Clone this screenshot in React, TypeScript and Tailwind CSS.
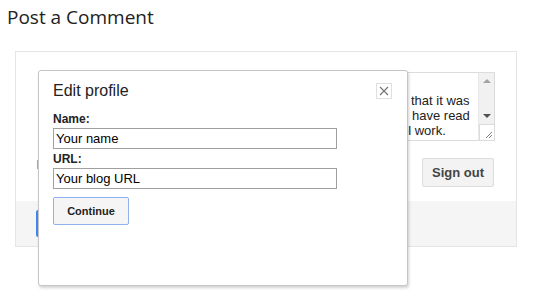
import React from 'react';

function Scrollbar() {
    return (
        <div className="flex w-[16px] flex-col border-l border-[#e8e8e8] bg-[#f1f1f1]">
            <div className="flex h-[16px] items-center justify-center">
                <div className="h-0 w-0 border-x-[4px] border-b-[4px] border-x-transparent border-b-[#a3a3a3]" />
            </div>
            <div className="flex-1" />
            <div className="flex h-[16px] items-center justify-center">
                <div className="h-0 w-0 border-x-[4px] border-t-[4px] border-x-transparent border-t-[#505050]" />
            </div>
            <div className="relative h-[16px] border-t border-l border-[#dcdcdc] bg-white">
                <svg className="absolute right-[1px] bottom-[1px]" width="10" height="10" viewBox="0 0 10 10">
                    <path d="M9 3 L3 9 M9 6 L6 9" stroke="#808080" strokeWidth="1" />
                </svg>
            </div>
        </div>
    );
}

function EditProfile() {
    return (
        <div className="absolute left-[38px] top-[70px] flex h-[216px] w-[370px] flex-col rounded-[3px] border border-[#c6c6c6] bg-white px-[14px] pt-[10px] shadow-[1px_2px_3px_rgba(0,0,0,0.18)]">
            <div className="flex items-start justify-between">
                <h2 className="text-[16px] leading-[20px] text-[#222]">Edit profile</h2>
                <button className="mr-[1px] mt-[2px] flex h-[16px] w-[16px] items-center justify-center border border-[#e0e0e0] bg-white">
                    <svg width="10" height="10" viewBox="0 0 10 10">
                        <path d="M1 1 L9 9 M9 1 L1 9" stroke="#777" strokeWidth="1.2" />
                    </svg>
                </button>
            </div>
            <label className="mt-[11px] text-[12px] font-bold leading-[14px] text-[#222]">Name:</label>
            <div className="mt-[2px] h-[21px] w-[284px] border border-[#a0a0a0] pl-[2px] text-[13px] leading-[19px] text-black">Your name</div>
            <label className="mt-[3px] text-[12px] font-bold leading-[14px] text-[#222]">URL:</label>
            <div className="mt-[2px] h-[21px] w-[284px] border border-[#a0a0a0] pl-[2px] text-[13px] leading-[19px] text-black">Your blog URL</div>
            <button className="mt-[8px] flex h-[28px] w-[76px] items-center justify-center rounded-[2px] border border-[#8fb1f0] bg-[#f5f5f5] text-[11px] font-bold text-[#222]">
                Continue
            </button>
        </div>
    );
}

export default function App() {
    return (
        <div className="relative h-[299px] w-[535px] overflow-hidden bg-white font-['Liberation_Sans',Arial,sans-serif]">
            <h1 className="pl-[7px] pt-[4px] font-['Open_Sans',sans-serif] text-[19px] leading-[27px] text-[#222]">Post a Comment</h1>
            <div className="ml-[15px] mt-[20px] flex h-[196px] w-[502px] flex-col border border-[#e5e5e5]">
                <div className="flex flex-1 flex-col items-end bg-white pr-[21px] pt-[20px]">
                    <div className="flex h-[69px] w-[300px] border border-[#dcdcdc] bg-white">
                        <div className="flex flex-1 flex-col pl-[205px] pt-[20px] text-[13px] leading-[15px] text-[#222]">
                            <div className="whitespace-nowrap pl-[10px]">that it was</div>
                            <div className="whitespace-nowrap pl-[11px]">have read</div>
                            <div className="whitespace-nowrap">ol work.</div>
                        </div>
                        <Scrollbar />
                    </div>
                    <div className="relative w-full">
                        <div className="absolute left-[21px] top-[19px] h-[9px] w-[1px] bg-[#e8a33a]" />
                    </div>
                    <button className="mt-[17px] mr-[1px] flex h-[29px] w-[72px] items-center justify-center rounded-[2px] border border-[#dcdcdc] bg-[#f3f3f3] text-[13px] font-bold text-[#444]">
                        Sign out
                    </button>
                </div>
                <div className="flex h-[45px] items-center bg-[#f5f5f5] pl-[20px]">
                    <div className="h-[27px] w-[60px] rounded-[2px] bg-[#4787ed]" />
                </div>
            </div>
            <EditProfile />
        </div>
    );
}
